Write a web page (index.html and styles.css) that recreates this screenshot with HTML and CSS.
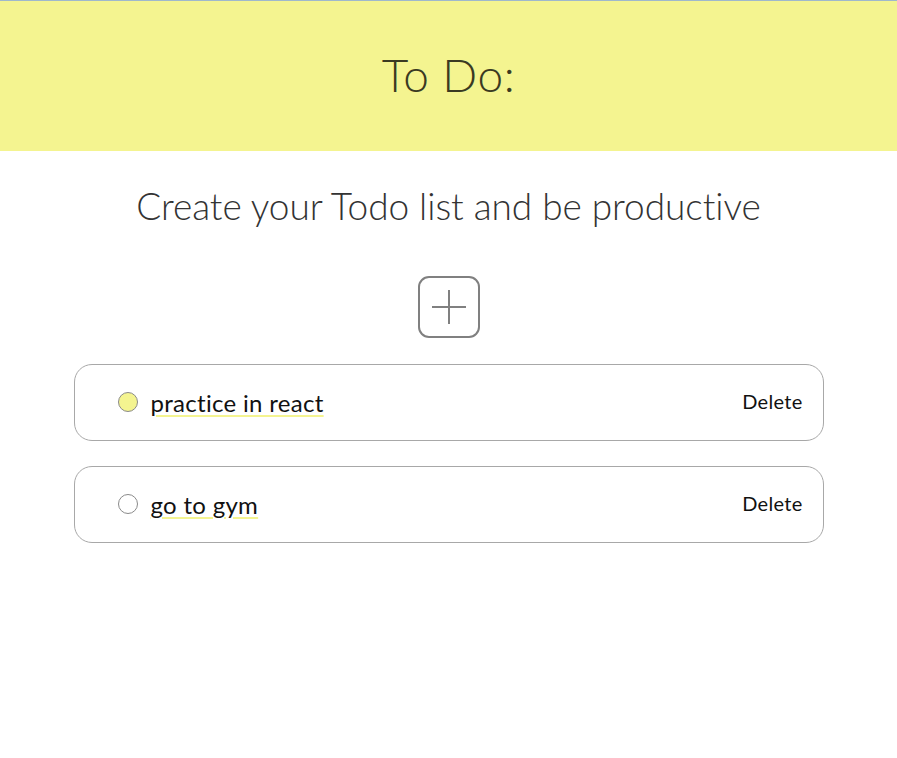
FILE: index.html
```html
<!DOCTYPE html>
<html>
<head>
<meta charset="utf-8">
<link rel="stylesheet" href="styles.css">
</head>
<body>
<header class="header">
  <h1 class="title">To Do:</h1>
</header>
<main class="main">
  <h2 class="subtitle">Create your Todo list and be productive</h2>
  <button class="add-btn" aria-label="Add">
    <svg width="36" height="36" viewBox="0 0 36 36"><path d="M18 1V35M1 18H35" stroke="#808080" stroke-width="2" fill="none"/></svg>
  </button>
  <ul class="list">
    <li class="item">
      <span class="dot dot-done"></span>
      <span class="item-text">practice in react</span>
      <span class="delete">Delete</span>
    </li>
    <li class="item">
      <span class="dot"></span>
      <span class="item-text">go to gym</span>
      <span class="delete">Delete</span>
    </li>
  </ul>
</main>
</body>
</html>
```
FILE: styles.css
```css
* { box-sizing: border-box; }
body {
  margin: 0;
  font-family: "Lato", "Open Sans", sans-serif;
  background: #fff;
}
.header {
  background: #f4f490;
  border-top: 1px solid #9fb8cc;
  height: 151px;
  display: flex;
  align-items: center;
  justify-content: center;
}
.title {
  margin: -4px 0 0;
  font-weight: 300;
  font-size: 46px;
  color: #3a3a22;
  letter-spacing: 0.5px;
}
.main {
  display: flex;
  flex-direction: column;
  align-items: center;
}
.subtitle {
  margin: 33px 0 0;
  font-weight: 300;
  font-size: 37px;
  color: #333;
  line-height: 44px;
  letter-spacing: -0.05px;
}
.add-btn {
  margin-top: 48px;
  width: 62px;
  height: 62px;
  border: 2px solid #808080;
  border-radius: 11px;
  background: #fff;
  display: flex;
  align-items: center;
  justify-content: center;
  padding: 0;
}
.list {
  list-style: none;
  margin: 26px 0 0;
  padding: 0;
  width: 750px;
  display: flex;
  flex-direction: column;
  gap: 25px;
}
.item {
  height: 77px;
  border: 1px solid #a8a8a8;
  border-radius: 18px;
  display: flex;
  align-items: center;
  padding: 0 20px 0 43px;
}
.dot {
  width: 20px;
  height: 20px;
  border-radius: 50%;
  border: 1px solid #8a8a8a;
  background: #fff;
  flex: none;
  margin-top: -2px;
}
.dot-done { background: #f4f490; }
.item-text {
  margin-left: 13px;
  font-size: 24px;
  font-weight: 400;
  color: #111;
  text-decoration: underline;
  text-decoration-color: #f4f490;
  text-decoration-thickness: 2px;
  text-underline-offset: 3px;
  flex: none;
  letter-spacing: 0.3px;
}
.delete {
  margin-left: auto;
  font-size: 20px;
  color: #111;
  margin-top: -3px;
  letter-spacing: 0.3px;
}
```
